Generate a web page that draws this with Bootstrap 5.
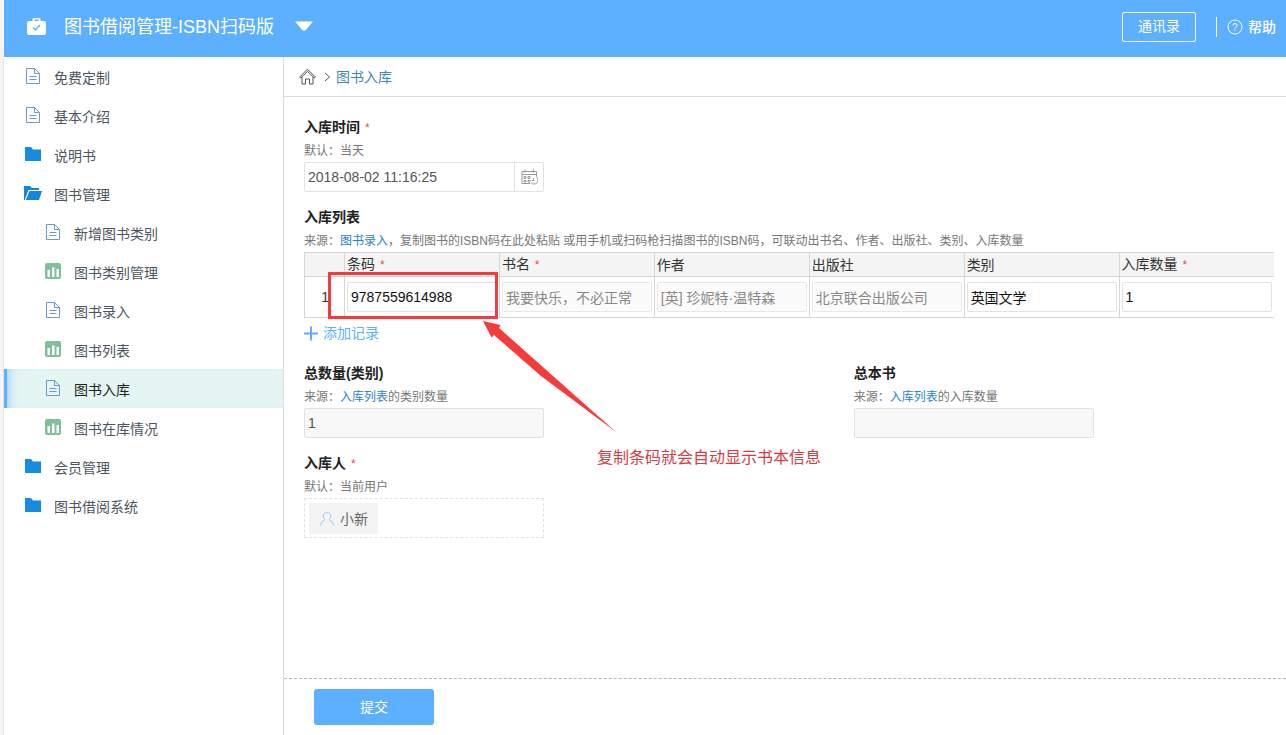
<!DOCTYPE html>
<html lang="zh-CN">
<head>
<meta charset="utf-8">
<meta name="viewport" content="width=device-width, initial-scale=1">
<title>图书借阅管理-ISBN扫码版</title>
<link href="https://cdn.jsdelivr.net/npm/bootstrap@5.3.0/dist/css/bootstrap.min.css" rel="stylesheet">
<style>
  :root { --brand: #5cb0ff; --line: #dcdcdc; --mark-red: #f53b3b; }
  body { font-family: "Liberation Sans", "Noto Sans CJK SC", sans-serif; font-size: 14px; line-height: 24px; color: #333; }
  a { text-decoration: none; }
  svg { display: block; flex: none; }
  .shell { border-left: 3px solid #f5f5f5; }
  .topbar { background: var(--brand); height: 57px; padding: 0 10px 4px 23px; margin-left: 1px; }
  .app-title { margin: 0 20px 0 18px; padding-top: 2px; font-size: 18px; font-weight: 400; }
  .btn-contacts { width: 74px; height: 30px; margin-right: 20px; padding: 0; border: 1px solid #fff; border-radius: 2px; color: #fff; font-size: 14px; }
  .help-link { border-left: 1px solid #fff; height: 20px; padding-left: 10px; gap: 5px; color: #fff; font-weight: 500; }
  .sidebar { width: 281px; flex: none; border-left: 1px solid #e4e4e4; border-right: 1px solid var(--line); }
  .sidebar a { height: 39px; padding: 2px 0 0 20px; color: #4c5560; gap: 12px; }
  .sidebar ul ul a { padding-left: 40px; }
  .sidebar svg { width: 18px; height: 18px; margin-bottom: 4px; }
  .sidebar ul ul a.current { background: #e4f5f3; color: #222; box-shadow: inset 3px 0 0 var(--brand), inset 11px 0 8px -5px #a9d5f5; }
  .crumbs { height: 40px; padding: 0 15px; border-bottom: 1px solid var(--line); }
  .crumbs a { color: #4186b8; }
  .crumb-sep { margin: 0 3px 0 7px; }
  .entry { padding: 17px 12px 0 20px; }
  .group { margin-bottom: 12px; }
  .group .title { display: block; height: 24px; margin: 0; font-size: 14px; line-height: 26px; font-weight: 700; color: #222; }
  .req { color: #e0524d; font-size: 12px; font-weight: 400; margin-left: 1px; }
  .hint { height: 24px; font-size: 12px; line-height: 26px; color: #777; margin: 0; white-space: nowrap; }
  .hint a { color: #2b7fd0; }
  .box { height: 30px; padding: 0 3px; border: 1px solid #e2e2e2; border-radius: 2px; font-size: 14px; line-height: 20px; color: #111; }
  .box[readonly] { background: #f8f8f8; color: #777; }
  .field { width: 240px; }
  .field .box { color: #555; }
  .btn-cal { width: 30px; height: 30px; padding: 0 0 0 6px; border: 1px solid #e2e2e2; border-radius: 0 2px 2px 0; }
  .records { table-layout: fixed; margin: 0; color: #333; }
  .records .num { width: 40px; }
  .records th, .records td { border: 1px solid #d6d6d6; }
  .records th { height: 24px; padding: 0 2px; background: #f4f4f4; font-weight: 400; line-height: 22px; }
  .records td { height: 41px; padding: 5px 2px; vertical-align: middle; }
  .records tr > :last-child { border-right: 0; }
  .records td.num { text-align: right; padding-right: 15px; }
  .records .box[readonly] { background: #fbfbfb; color: #888; border-color: #e8e8e8; }
  .btn-add { height: 30px; padding: 0; border: 0; color: var(--brand); font-size: 14px; gap: 4px; }
  .totals { display: grid; grid-template-columns: 17fr 13fr; }
  .people { height: 40px; padding: 4px; border: 1px dashed #e2e2e2; }
  .person { height: 31px; padding: 0 10px; background: #f3f3f3; color: #666; gap: 5px; }
  .footer-bar { border-top: 1px dashed #b5b5b5; padding: 10px 30px; }
  .btn-submit { width: 120px; height: 36px; padding: 0; background: var(--brand); border: 0; border-radius: 3px; color: #fff; font-size: 14px; }
  /* red call-out drawn over the bar code cell */
  .callout-frame { position: absolute; inset: -10px -1px -7px -19px; border: 3px solid var(--mark-red); pointer-events: none; }
  .callout-arrow { position: absolute; top: 38px; left: calc(100% - 14px); pointer-events: none; z-index: 2; }
  .callout-text { position: absolute; top: 164px; left: 100%; margin-left: 100px; font-size: 16px; color: #d43c43; white-space: nowrap; z-index: 2; }
</style>
</head>
<body>
<svg class="d-none" aria-hidden="true">
  <symbol id="i-doc" viewBox="0 0 18 18"><path d="M2.500 1.500h8l5 5v10h-13zM10.500 1.500v5h5M5.500 9.500h7M5.500 12.500h7" fill="none" stroke="#6d9bc9"/></symbol>
  <symbol id="i-folder" viewBox="0 0 18 18"><path d="M1 2h6l2 2.500h8V16H1z" fill="#168be0"/></symbol>
  <symbol id="i-open" viewBox="0 0 18 18"><path d="M0 2h6l2 2h7v2H4.500L1.500 14 1 16H0z" fill="#1685df"/><path d="M5.500 7H18l-3 9H1.800z" fill="#1685df"/></symbol>
  <symbol id="i-chart" viewBox="0 0 18 18"><rect x="1" y="1" width="16" height="16" rx="2" fill="#80bf9c"/><path d="M3.500 8h2.500v7H3.500zM8 5.500h2.500V15H8zM12.500 7H15v8h-2.500z" fill="#fff"/></symbol>
</svg>
<div class="shell d-flex flex-column min-vh-100">
  <header class="topbar d-flex align-items-center text-white">
    <svg width="19" height="19" viewBox="0 0 19 19"><path d="M2 4h3.500V2.500Q5.500 1 7 1h5q1.500 0 1.500 1.500V4H17q2 0 2 2v10q0 2-2 2H2q-2 0-2-2V6q0-2 2-2zm5.500 0h4V2.500h-4z" fill="#fff"/><path d="M6 10.500l2.500 2.500 4.500-5" fill="none" stroke="#5cb0ff" stroke-width="1.500"/></svg>
    <h1 class="app-title">图书借阅管理-ISBN扫码版</h1>
    <button class="btn border-0 p-0" type="button" aria-label="切换应用"><svg width="20" height="11" viewBox="0 0 20 11"><path d="M1 .500h18L12 8.800q-2 2-4 0z" fill="#fff"/></svg></button>
    <button class="btn btn-contacts ms-auto" type="button">通讯录</button>
    <a href="#" class="help-link d-flex align-items-center"><svg width="16" height="16" viewBox="0 0 16 16" fill="none" stroke="#fff"><circle cx="8" cy="8" r="7"/><path d="M6 6.500q0-2 2-2t2 2q0 1-1 1.500t-1 1.500M8 10.500v1.300"/></svg>帮助</a>
  </header>
  <div class="d-flex flex-grow-1">
    <nav class="sidebar" aria-label="目录">
      <ul class="list-unstyled mb-0">
        <li><a href="#" class="d-flex align-items-center"><svg><use href="#i-doc"/></svg>免费定制</a></li>
        <li><a href="#" class="d-flex align-items-center"><svg><use href="#i-doc"/></svg>基本介绍</a></li>
        <li><a href="#" class="d-flex align-items-center"><svg><use href="#i-folder"/></svg>说明书</a></li>
        <li><a href="#" class="d-flex align-items-center"><svg><use href="#i-open"/></svg>图书管理</a>
          <ul class="list-unstyled">
            <li><a href="#" class="d-flex align-items-center"><svg><use href="#i-doc"/></svg>新增图书类别</a></li>
            <li><a href="#" class="d-flex align-items-center"><svg><use href="#i-chart"/></svg>图书类别管理</a></li>
            <li><a href="#" class="d-flex align-items-center"><svg><use href="#i-doc"/></svg>图书录入</a></li>
            <li><a href="#" class="d-flex align-items-center"><svg><use href="#i-chart"/></svg>图书列表</a></li>
            <li><a href="#" class="current d-flex align-items-center" aria-current="page"><svg><use href="#i-doc"/></svg>图书入库</a></li>
            <li><a href="#" class="d-flex align-items-center"><svg><use href="#i-chart"/></svg>图书在库情况</a></li>
          </ul>
        </li>
        <li><a href="#" class="d-flex align-items-center"><svg><use href="#i-folder"/></svg>会员管理</a></li>
        <li><a href="#" class="d-flex align-items-center"><svg><use href="#i-folder"/></svg>图书借阅系统</a></li>
      </ul>
    </nav>
    <main class="d-flex flex-column flex-grow-1">
      <nav class="crumbs d-flex align-items-center" aria-label="位置">
        <a href="#" aria-label="首页"><svg width="17" height="17" viewBox="0 0 17 17" fill="none" stroke="#555"><path d="M.7 9L8.500 1.200 16.300 9l-1 1L8.500 3.400 1.700 10zM3 9v7h3.500v-5h4v5H14V9"/></svg></a>
        <svg class="crumb-sep" width="10" height="12" viewBox="0 0 10 12"><path d="M2 2l4.500 4L2 10" fill="none" stroke="#555"/></svg>
        <a href="#">图书入库</a>
      </nav>
      <form class="d-flex flex-column flex-grow-1">
        <div class="entry flex-grow-1">
          <div class="group">
            <label class="title" for="time">入库时间 <span class="req">*</span></label>
            <p class="hint">默认：当天</p>
            <div class="field input-group">
              <input id="time" class="form-control box" type="text" value="2018-08-02 11:16:25">
              <button class="btn btn-cal" type="button" aria-label="选择日期"><svg width="17" height="16" viewBox="0 0 17 16" fill="none" stroke="#999"><path d="M9 14.500H1v-12h14.500V7M1 5.500h14.500M4 .500v3M12.500.500v3M3 7.500h2v2H3zM7 7.500h2v2H7zM3 11.500h2v1.500H3zM7 11.500h2v1.500H7zM12.500 9v2.500H10.500"/><path d="M15 7.500a4 4 0 1 1-5 6"/></svg></button>
            </div>
          </div>
          <div class="group">
            <h2 class="title">入库列表</h2>
            <p class="hint">来源：<a href="#">图书录入</a>，复制图书的ISBN码在此处粘贴 或用手机或扫码枪扫描图书的ISBN码，可联动出书名、作者、出版社、类别、入库数量</p>
            <table class="records w-100">
              <thead>
                <tr>
                  <th class="num" aria-label="序号"></th>
                  <th scope="col">条码 <span class="req">*</span></th>
                  <th scope="col">书名 <span class="req">*</span></th>
                  <th scope="col">作者</th>
                  <th scope="col">出版社</th>
                  <th scope="col">类别</th>
                  <th scope="col">入库数量 <span class="req">*</span></th>
                </tr>
              </thead>
              <tbody>
                <tr>
                  <td class="num">1</td>
                  <td>
                    <div class="position-relative">
                      <input class="form-control box" type="text" aria-label="条码" value="9787559614988">
                      <div class="callout-frame"></div>
                      <svg class="callout-arrow" width="134" height="113" viewBox="0 0 134 113"><path d="M0 1l17.500 4-1.500 3L70 56l63 56-75-56L11 15l-2.500 2.500z" fill="#f53b3b"/></svg>
                      <span class="callout-text">复制条码就会自动显示书本信息</span>
                    </div>
                  </td>
                  <td><input class="form-control box" type="text" aria-label="书名" value="我要快乐，不必正常" readonly></td>
                  <td><input class="form-control box" type="text" aria-label="作者" value="[英] 珍妮特·温特森" readonly></td>
                  <td><input class="form-control box" type="text" aria-label="出版社" value="北京联合出版公司" readonly></td>
                  <td><input class="form-control box" type="text" aria-label="类别" value="英国文学"></td>
                  <td><input class="form-control box" type="text" aria-label="入库数量" value="1"></td>
                </tr>
              </tbody>
            </table>
            <button class="btn btn-add d-flex align-items-center" type="button"><svg width="15" height="15" viewBox="0 0 15 15"><path d="M0 7.500h14M7 .500v14" stroke="#5cb0ff" stroke-width="2"/></svg>添加记录</button>
          </div>
          <div class="totals">
            <div class="group">
              <label class="title" for="kinds">总数量(类别)</label>
              <p class="hint">来源：<a href="#">入库列表</a>的类别数量</p>
              <div class="field"><input id="kinds" class="form-control box" type="text" value="1" readonly></div>
            </div>
            <div class="group">
              <label class="title" for="copies">总本书</label>
              <p class="hint">来源：<a href="#">入库列表</a>的入库数量</p>
              <div class="field"><input id="copies" class="form-control box" type="text" readonly></div>
            </div>
          </div>
          <div class="group">
            <h2 class="title">入库人 <span class="req">*</span></h2>
            <p class="hint">默认：当前用户</p>
            <div class="field people d-flex">
              <span class="person d-flex align-items-center"><svg width="16" height="16" viewBox="0 0 16 16" fill="none" stroke="#a3cdf0"><path d="M5.500 8.500C3 5.500 4 1.500 8 1.500s5 4 2.500 7M6 8.500Q2 10 1.500 14.500M10 8.500q4 1.500 4.500 6"/></svg>小新</span>
            </div>
          </div>
        </div>
        <div class="footer-bar"><button class="btn btn-submit" type="submit">提交</button></div>
      </form>
    </main>
  </div>
</div>
<script src="https://cdn.jsdelivr.net/npm/bootstrap@5.3.0/dist/js/bootstrap.bundle.min.js"></script>
</body>
</html>
